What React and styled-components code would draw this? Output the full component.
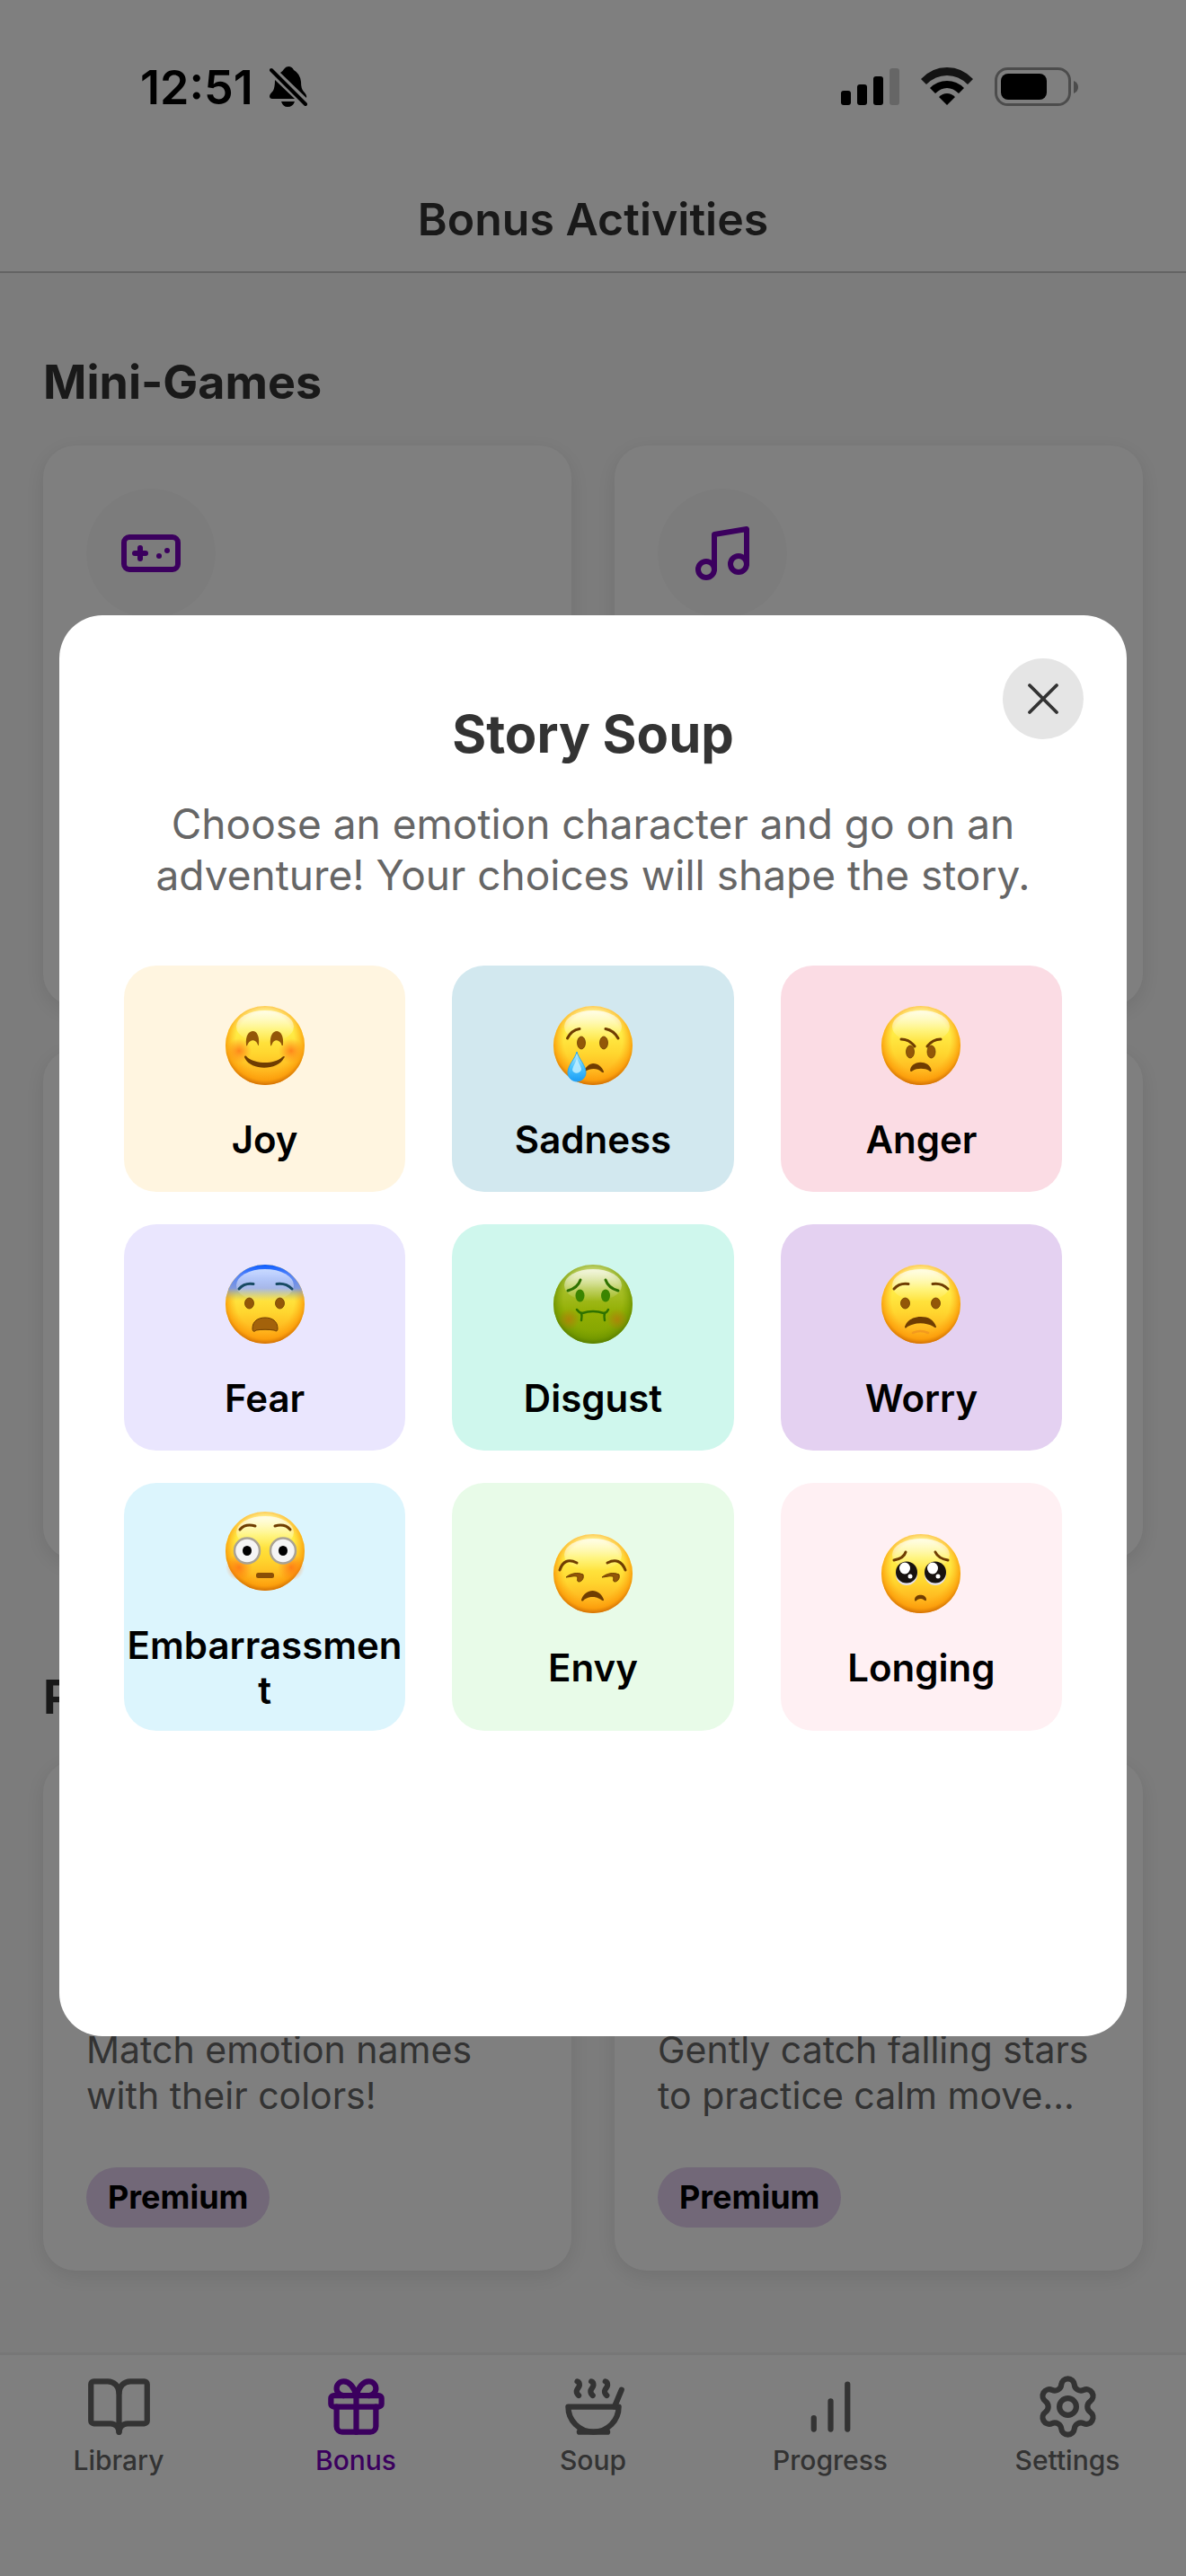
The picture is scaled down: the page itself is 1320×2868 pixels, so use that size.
import React from "react";
import styled, { createGlobalStyle } from "styled-components";
import { BookOpen, Gamepad, Gift, Music, Settings, Soup, X } from "lucide-react";

const emotions = [
  { name: "Joy", color: "#fff5e0", Face: JoyFace },
  { name: "Sadness", color: "#d2e8ef", Face: SadFace },
  { name: "Anger", color: "#fbdce4", Face: AngerFace },
  { name: "Fear", color: "#eae6fe", Face: FearFace },
  { name: "Disgust", color: "#cff7ed", Face: DisgustFace },
  { name: "Worry", color: "#e4d1f1", Face: WorryFace },
  { name: "Embarrassment", color: "#dcf5fd", Face: FlushedFace },
  { name: "Envy", color: "#e8fbe8", Face: EnvyFace },
  { name: "Longing", color: "#fff0f3", Face: LongingFace },
];

const tabs = [
  { label: "Library", Icon: BookOpen },
  { label: "Bonus", Icon: Gift, active: true },
  { label: "Soup", Icon: Soup },
  { label: "Progress", Icon: BarsIcon },
  { label: "Settings", Icon: Settings },
];

export default function App() {
  return (
    <>
      <GlobalStyle />
      <Screen>
        <StatusBar>
          <Clock>
            12:51
            <BellOff />
          </Clock>
          <Indicators>
            <SignalIcon />
            <WifiIcon />
            <BatteryIcon />
          </Indicators>
        </StatusBar>
        <Header>
          <HeaderTitle>Bonus Activities</HeaderTitle>
        </Header>

        <Content>
          <SectionTitle>Mini-Games</SectionTitle>
          <CardGrid>
            <Card $size="tall">
              <IconCircle>
                <Gamepad size={72} />
              </IconCircle>
            </Card>
            <Card $size="tall">
              <IconCircle>
                <Music size={72} />
              </IconCircle>
            </Card>
            <Card />
            <Card />
          </CardGrid>

          <SectionTitle>P</SectionTitle>
          <CardGrid>
            <Card>
              <CardText>Match emotion names with their colors!</CardText>
              <Badge>Premium</Badge>
            </Card>
            <Card>
              <CardText>Gently catch falling stars to practice calm move...</CardText>
              <Badge>Premium</Badge>
            </Card>
          </CardGrid>
        </Content>

        <TabBar>
          {tabs.map(({ label, Icon, active }) => (
            <Tab key={label} href={"#" + label.toLowerCase()} $active={active}>
              <Icon size={75} />
              {label}
            </Tab>
          ))}
        </TabBar>
      </Screen>

      <Overlay>
        <Modal role="dialog" aria-modal="true" aria-labelledby="modal-title">
          <CloseButton aria-label="Close">
            <X size={60} strokeWidth={1.5} />
          </CloseButton>
          <ModalTitle id="modal-title">Story Soup</ModalTitle>
          <ModalText>
            Choose an emotion character and go on an adventure! Your choices
            will shape the story.
          </ModalText>
          <EmotionGrid>
            {emotions.map(({ name, color, Face }) => (
              <EmotionButton key={name} $color={color}>
                <Face />
                <span>{name}</span>
              </EmotionButton>
            ))}
          </EmotionGrid>
        </Modal>
      </Overlay>
    </>
  );
}

/* ---------- status bar and tab icons ---------- */

function BellOff() {
  return (
    <svg width="42" height="46" viewBox="0 0 42 46" aria-label="Silent">
      <path
        d="M12 7Q15 5 16 3Q18 0 21 0Q25 0 27 4Q34 8 35 17Q35 25 38 28Q42 32 41 35Z M6 15L28 36H3Q0 36 0 33Q0 31 4 27Q6 23 6 15Z M13 39H28Q26 45 20 45Q15 45 13 39Z"
        fill="#000"
      />
      <path d="M2 4L40 42" stroke="#000" strokeWidth="4" strokeLinecap="round" />
    </svg>
  );
}

function SignalIcon() {
  return (
    <svg width="65" height="44" viewBox="0 0 65 44">
      <rect x="0" y="26" width="11" height="16" rx="3" />
      <rect x="18" y="19" width="11" height="23" rx="3" />
      <rect x="36" y="10" width="11" height="32" rx="3" />
      <rect x="54" y="1" width="11" height="41" rx="3" fill="#ccc" />
    </svg>
  );
}

function WifiIcon() {
  return (
    <svg width="58" height="44" viewBox="0 0 58 44">
      <path d="M0 13Q12 0 29 0Q46 0 58 13L52 19Q42 9 29 9Q16 9 6 19Z" fill="#262626" />
      <path d="M10 23Q18 15 29 15Q40 15 48 23L42 29Q36 23 29 23Q22 23 16 29Z" />
      <path d="M20 33Q24 29 29 29Q34 29 38 33L29 42Z" />
    </svg>
  );
}

function BatteryIcon() {
  return (
    <svg width="93" height="44" viewBox="0 0 93 44">
      <rect x="1.5" y="1.5" width="82" height="40" rx="13" fill="none" stroke="#999" strokeWidth="3" />
      <rect x="7" y="7" width="51" height="29" rx="8" />
      <path d="M88 15Q93 17 93 22Q93 27 88 29Z" fill="#999" />
    </svg>
  );
}

function BarsIcon({ size }) {
  return (
    <svg
      width={size}
      height={size}
      viewBox="0 0 24 24"
      fill="none"
      stroke="currentColor"
      strokeWidth="2"
      strokeLinecap="round"
    >
      <path d="M6 20v-4M12 20V10M18 20V4" />
    </svg>
  );
}

/* ---------- emotion faces ---------- */

const ink = "#6f3d02";
const eye = "#935708";

function Face({ id, label, green, cold, children }) {
  return (
    <svg width="88" height="88" viewBox="0 0 88 88" role="img" aria-label={label} fill="none">
      <defs>
        <linearGradient id={id + "-skin"} x1="0" y1="0" x2="0" y2="1">
          <stop offset="0" stopColor={green ? "#dbe695" : "#fffbb0"} />
          <stop offset="0.3" stopColor={green ? "#a9c02b" : "#fff04a"} />
          <stop offset="0.6" stopColor={green ? "#93af04" : "#ffd62f"} />
          <stop offset="1" stopColor={green ? "#7ea100" : "#ff9f12"} />
        </linearGradient>
        <radialGradient id={id + "-rim"} cx="0.5" cy="0.45" r="0.56">
          <stop offset="0.66" stopColor={green ? "#7ea300" : "#ffae14"} stopOpacity="0" />
          <stop offset="0.87" stopColor={green ? "#6f9500" : "#fb9d0a"} stopOpacity="0.8" />
          <stop offset="1" stopColor={green ? "#527a00" : "#c96703"} />
        </radialGradient>
        <linearGradient id={id + "-shine"} x1="0" y1="0" x2="0" y2="1">
          <stop offset="0" stopColor="#fff" stopOpacity="0.75" />
          <stop offset="1" stopColor="#fff" stopOpacity="0" />
        </linearGradient>
        <linearGradient id={id + "-cold"} x1="0" y1="0" x2="0" y2="1">
          <stop offset="0" stopColor="#0a5cff" />
          <stop offset="0.12" stopColor="#4f80fb" />
          <stop offset="0.3" stopColor="#8299dc" />
          <stop offset="0.46" stopColor="#b9b660" stopOpacity="0" />
        </linearGradient>
        <radialGradient id={id + "-blush"}>
          <stop offset="0" stopColor={green ? "#b57a0a" : "#ff6a12"} stopOpacity="0.75" />
          <stop offset="1" stopColor={green ? "#b57a0a" : "#ff7a12"} stopOpacity="0" />
        </radialGradient>
      </defs>
      <circle cx="44" cy="44" r="44" fill={`url(#${id}-skin)`} />
      <circle cx="44" cy="44" r="44" fill={`url(#${id}-rim)`} />
      {cold && <circle cx="44" cy="44" r="44" fill={`url(#${id}-cold)`} />}
      <ellipse cx="44" cy="23" rx="32" ry="18" fill={`url(#${id}-shine)`} />
      {children}
    </svg>
  );
}

function Brows({ left, right, color = ink }) {
  return (
    <g stroke={color} strokeWidth="3" strokeLinecap="round">
      <path d={left} />
      <path d={right} />
    </g>
  );
}

function Eyes({ x1, x2, y, rx = 5, ry = 6, color = eye }) {
  return (
    <g fill={color} stroke={color === eye ? ink : "none"} strokeWidth="0.8">
      <ellipse cx={x1} cy={y} rx={rx} ry={ry} />
      <ellipse cx={x2} cy={y} rx={rx} ry={ry} />
    </g>
  );
}

function JoyFace() {
  return (
    <Face id="joy" label="Smiling face">
      <circle cx="15" cy="50" r="14" fill="url(#joy-blush)" />
      <circle cx="73" cy="50" r="14" fill="url(#joy-blush)" />
      <path
        d="M23 43C22 33 26 28 30.5 28S38 34 37 43C37 45 36 44 35.5 42C33 37 28 37 25 42C24 45 23 45 23 43Z M50 43C49 33 53 28 57 28S65 33 64 43C64 45 62 44 62 42C59 37 54 37 52 42C51 45 50 45 50 43Z"
        fill={eye}
      />
      <path d="M21 57C21 55 23 55 24 57C34 65 54 65 63 57C65 55 67 56 65 58C58 72 29 72 22 59Z" fill={ink} />
    </Face>
  );
}

function SadFace() {
  return (
    <Face id="sad" label="Crying face">
      <Brows left="M15.5 36Q20 27 29 25.5" right="M58 25.5Q67 27 72 36" />
      <Eyes x1={31} x2={56} y={41} rx={4.5} ry={7} />
      <path d="M35 70C38 66 41 64 44 64C50 64 54 68 56 73C56 75 54 74 53 73C49 69 41 69 35 73Z" fill={ink} />
      <defs>
        <linearGradient id="tear" x1="0" y1="0" x2="0" y2="1">
          <stop offset="0" stopColor="#c9efff" />
          <stop offset="0.5" stopColor="#4cc6ff" />
          <stop offset="1" stopColor="#1b9df5" />
        </linearGradient>
      </defs>
      <path d="M26 51C28 59 36 66 36 74C36 80 31 84 26 84S16 80 16 74C16 66 24 59 26 51Z" fill="url(#tear)" stroke="#2aa7f2" />
      <path d="M26 58C28 64 31 67 31 71C29 76 22 76 21 71C22 66 25 63 26 58Z" fill="#c8f1ff" opacity="0.8" />
    </Face>
  );
}

function AngerFace() {
  return (
    <Face id="anger" label="Angry face">
      <Brows left="M22 37Q31 37 37 45" right="M51 45Q57 37 66 37" />
      <Eyes x1={32} x2={55.5} y={51} rx={4.5} ry={7} />
      <path d="M32 71C34 60 53 60 55.5 71C56 74 54 73 53 72C49 69 39 69 35 72C33 74 32 73 32 71Z" fill={ink} />
    </Face>
  );
}

function FearFace() {
  return (
    <Face id="fear" label="Fearful face" cold>
      <Brows color="#174a63" left="M15 27Q21 20 31 21.5" right="M57 21.5Q67 20 74 27" />
      <Eyes x1={26.5} x2={60.5} y={43} />
      <path d="M30 71C30 63 36 59 44 59S58 63 58 71C58 75 56 74 54 73C48 72 40 72 34 73C32 75 30 75 30 71Z" fill="#a3620b" stroke={ink} />
    </Face>
  );
}

function DisgustFace() {
  return (
    <Face id="disgust" label="Nauseated face" green>
      <circle cx="17" cy="61" r="12" fill="url(#disgust-blush)" />
      <circle cx="71" cy="61" r="12" fill="url(#disgust-blush)" />
      <Brows color="#2f7200" left="M16 29Q27 26 30 17" right="M58 17Q61 26 72 29" />
      <Eyes x1={29.5} x2={58} y={34.5} ry={7} color="#3b8500" />
      <g stroke="#2f7200" strokeWidth="2.5" strokeLinecap="round">
        <path d="M26 50Q29 54 32 54Q44 50 56 54Q59 54 61 50" />
        <path d="M31 54Q32 57 31 62M57 54Q56 57 57 62" />
      </g>
    </Face>
  );
}

function WorryFace() {
  return (
    <Face id="worry" label="Worried face">
      <Brows left="M14 27Q20 20 30 21.5" right="M57 21.5Q67 20 74 27" />
      <Eyes x1={26.5} x2={60.5} y={43} />
      <path d="M26 69C29 61 36 58 44 58S58 61 61 69C61 71 59 70 58 69C49 64 38 64 29 69C27 71 26 71 26 69Z" fill={ink} />
      <path d="M35 76Q43 72 52 76" stroke="#f39a1e" strokeWidth="2.5" strokeLinecap="round" />
    </Face>
  );
}

function FlushedFace() {
  return (
    <Face id="flushed" label="Flushed face">
      <circle cx="15" cy="62" r="15" fill="url(#flushed-blush)" />
      <circle cx="73" cy="62" r="15" fill="url(#flushed-blush)" />
      <Brows left="M16 20Q22 13 33 16" right="M55 16Q66 13 72 20" />
      <g fill="#f5f5f5" stroke="#a9a294" strokeWidth="2.5">
        <circle cx="24" cy="43.5" r="14" />
        <circle cx="64" cy="43.5" r="14" />
      </g>
      <Eyes x1={24} x2={64} y={43.5} rx={5} ry={5.5} color="#000" />
      <rect x="34" y="68" width="20" height="6" rx="2.5" fill="#8a4f06" />
    </Face>
  );
}

function EnvyFace() {
  return (
    <Face id="envy" label="Unamused face">
      <Brows left="M7 40Q12 25 26 32" right="M60 32Q74 25 80 40" />
      <path
        d="M14 48C19 44 26 42 33 45C34 49 32 53 28 53C25 52 28 49 26 47C22 46 18 48 14 48Z M54 48C59 44 66 42 73 45C74 49 72 53 68 53C65 52 68 49 66 47C62 46 58 48 54 48Z"
        fill={eye}
        stroke={ink}
      />
      <path d="M31 73C33 67 38 63 43.5 63S54 67 56 73C56 75 54 74 53 73C47 69 40 69 34 73C33 75 31 75 31 73Z" fill={ink} />
    </Face>
  );
}

function LongingFace() {
  return (
    <Face id="longing" label="Pleading face">
      <Brows left="M14 29Q25 27 27 20" right="M60 20Q63 27 74 29" />
      <g fill="#e4e0e6">
        <ellipse cx="28" cy="45" rx="12" ry="12" />
        <ellipse cx="60" cy="45" rx="12" ry="12" />
      </g>
      <g fill="#17120f">
        <ellipse cx="28" cy="42.5" rx="12" ry="12" />
        <ellipse cx="60" cy="42.5" rx="12" ry="12" />
      </g>
      <g fill="#fff">
        <ellipse cx="26" cy="38" rx="6" ry="6.5" />
        <ellipse cx="57" cy="38" rx="6" ry="6.5" />
        <circle cx="32" cy="47" r="2.5" />
        <circle cx="63" cy="47" r="2.5" />
      </g>
      <path d="M37 73C37 66 50 66 50 73C50 75 48 74 47 73Q44 71 40 73C38 75 37 75 37 73Z" fill={ink} />
    </Face>
  );
}

/* ---------- styles ---------- */

const GlobalStyle = createGlobalStyle`
  * {
    box-sizing: border-box;
  }
  body {
    margin: 0;
    font-family: Inter, "Liberation Sans", sans-serif;
    color: #333;
  }
  h1, h2, p {
    margin: 0;
  }
  button {
    border: none;
    padding: 0;
    font-family: inherit;
  }
  svg {
    flex-shrink: 0;
  }
`;

const Screen = styled.div`
  display: flex;
  flex-direction: column;
  min-height: 100vh;
  background-color: #f9f9f9;
`;

const StatusBar = styled.div`
  display: flex;
  justify-content: space-between;
  align-items: center;
  height: 186px;
  padding: 8px 120px 0 156px;
  background-color: #fff;
`;

const Clock = styled.div`
  display: flex;
  align-items: center;
  gap: 18px;
  font-size: 52px;
  font-weight: 600;
  color: #000;
`;

const Indicators = styled.div`
  display: flex;
  align-items: center;
  gap: 24px;
`;

const Header = styled.header`
  display: flex;
  justify-content: center;
  align-items: center;
  height: 118px;
  background-color: #fff;
  border-bottom: 2px solid #c8c8c8;
`;

const HeaderTitle = styled.h1`
  font-size: 50px;
  font-weight: 600;
`;

const Content = styled.main`
  display: flex;
  flex-direction: column;
  flex: 1;
  padding: 88px 48px;
`;

const SectionTitle = styled.h2`
  margin-bottom: 36px;
  font-size: 52px;
  line-height: 68px;
  font-weight: 700;
`;

const CardGrid = styled.div`
  display: grid;
  grid-template-columns: 1fr 1fr;
  gap: 48px;
  margin-bottom: 120px;

  &:last-child {
    margin-bottom: 0;
  }
`;

const Card = styled.div`
  display: flex;
  flex-direction: column;
  align-items: flex-start;
  justify-content: ${(p) => (p.$size === "tall" ? "flex-start" : "flex-end")};
  min-height: ${(p) => (p.$size === "tall" ? 624 : 568)}px;
  padding: 48px;
  border-radius: 36px;
  background-color: #fff;
  box-shadow: 0 6px 24px rgba(0, 0, 0, 0.1);
`;

const IconCircle = styled.div`
  display: flex;
  justify-content: center;
  align-items: center;
  width: 144px;
  height: 144px;
  border-radius: 50%;
  background-color: #f9f9f9;
  color: #7600bc;
`;

const CardText = styled.p`
  margin-bottom: 54px;
  font-size: 41px;
  line-height: 51px;
  color: #666;
`;

const Badge = styled.span`
  padding: 12px 24px;
  border-radius: 36px;
  background-color: #e4d1f1;
  font-size: 36px;
  line-height: 43px;
  font-weight: 700;
  color: #000;
`;

const TabBar = styled.nav`
  display: flex;
  height: 249px;
  padding-top: 20px;
  background-color: #fff;
  border-top: 3px solid #eee;
`;

const Tab = styled.a`
  display: flex;
  flex: 1;
  flex-direction: column;
  align-items: center;
  gap: 2px;
  font-size: 30px;
  line-height: 40px;
  font-weight: 500;
  text-decoration: none;
  color: ${(p) => (p.$active ? "#7600bc" : "#666")};
`;

const Overlay = styled.div`
  position: fixed;
  inset: 0;
  display: flex;
  justify-content: center;
  align-items: center;
  padding-top: 84px;
  background-color: rgba(0, 0, 0, 0.5);
`;

const Modal = styled.section`
  position: relative;
  width: 90%;
  padding: 96px 72px 340px;
  border-radius: 48px;
  background-color: #fff;
`;

const CloseButton = styled.button`
  position: absolute;
  top: 48px;
  right: 48px;
  display: flex;
  justify-content: center;
  align-items: center;
  width: 90px;
  height: 90px;
  border-radius: 50%;
  background-color: #e5e5e5;
  color: #333;
`;

const ModalTitle = styled.h2`
  margin-bottom: 36px;
  font-size: 58px;
  line-height: 72px;
  font-weight: 700;
  text-align: center;
`;

const ModalText = styled.p`
  margin-bottom: 72px;
  font-size: 46px;
  line-height: 57px;
  text-align: center;
  color: #666;
`;

const EmotionGrid = styled.div`
  display: grid;
  grid-template-columns: repeat(3, 30%);
  justify-content: space-between;
  row-gap: 36px;
`;

const EmotionButton = styled.button`
  display: flex;
  flex-direction: column;
  justify-content: center;
  align-items: center;
  gap: 36px;
  min-height: 252px;
  padding: 32px 0 20px;
  border-radius: 36px;
  background-color: ${(p) => p.$color};
  font-size: 42px;
  line-height: 50px;
  font-weight: 600;
  color: #000;

  span {
    max-width: 100%;
    overflow-wrap: break-word;
  }
`;
